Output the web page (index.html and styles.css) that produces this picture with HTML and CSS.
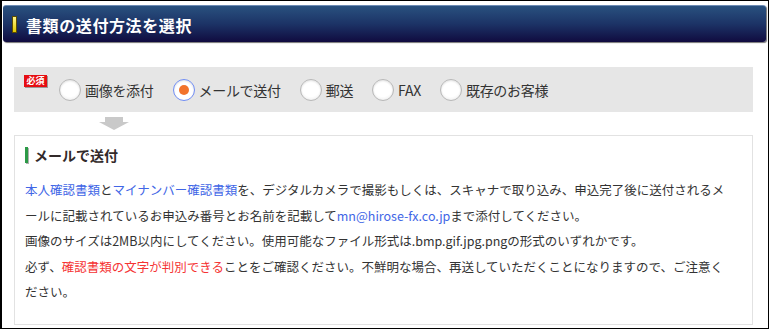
FILE: index.html
```html
<!DOCTYPE html>
<html lang="ja">
<head>
  <meta charset="UTF-8">
  <title>書類の送付方法を選択</title>
  <link rel="stylesheet" href="styles.css">
</head>
<body>
  <div class="frame">
    <header class="title-bar">
      <span class="title-mark"></span>
      <h1>書類の送付方法を選択</h1>
    </header>

    <div class="section">
      <div class="method-row">
        <span class="required">必須</span>
        <label class="method"><span class="radio"></span>画像を添付</label>
        <label class="method"><span class="radio checked"></span>メールで送付</label>
        <label class="method"><span class="radio"></span>郵送</label>
        <label class="method"><span class="radio"></span>FAX</label>
        <label class="method"><span class="radio"></span>既存のお客様</label>
      </div>

      <svg class="down-arrow" width="30" height="13" viewBox="0 0 30 13">
        <polygon points="6,0 24,0 24,5 30,5 15,13 0,5 6,5" fill="#c9c9c9" />
      </svg>

      <div class="method-box">
        <h2><span class="sub-mark"></span>メールで送付</h2>
        <p><a href="#" class="link">本人確認書類</a>と<a href="#" class="link">マイナンバー確認書類</a>を、デジタルカメラで撮影もしくは、スキャナで取り込み、申込完了後に送付されるメールに記載されているお申込み番号とお名前を記載して<a href="#" class="link">mn@hirose-fx.co.jp</a>まで添付してください。</p>
        <p>画像のサイズは2MB以内にしてください。使用可能なファイル形式は.bmp.gif.jpg.pngの形式のいずれかです。</p>
        <p>必ず、<span class="alert">確認書類の文字が判別できる</span>ことをご確認ください。不鮮明な場合、再送していただくことになりますので、ご注意ください。</p>
      </div>
    </div>
  </div>
</body>
</html>
```

FILE: styles.css
```css
body {
  margin: 0;
  padding: 0;
  background: #fff;
  font-family: "Noto Sans CJK JP", "Liberation Sans", sans-serif;
  color: #333;
}

.frame {
  box-sizing: border-box;
  width: 769px;
  height: 329px;
  border: 1px solid #000;
  border-left-width: 2px;
  padding: 4px 2px 0 1px;
  overflow: hidden;
}

.title-bar {
  display: flex;
  align-items: center;
  height: 37px;
  box-sizing: border-box;
  padding: 1px 0 0 9px;
  border-radius: 3px;
  border-top: 1px solid #6d8bb4;
  background: linear-gradient(#29517f, #1c3366 50%, #100b3f);
  box-shadow: 1px 1px 1px rgba(0,0,0,0.55);
}

.title-mark {
  width: 3px;
  height: 15px;
  border: 1px solid #5c4c00;
  background: linear-gradient(#fff58a, #e2c900);
  margin-right: 9px;
}

.title-bar h1 {
  margin: 0;
  font-size: 16px;
  font-weight: bold;
  letter-spacing: 0.6px;
  color: #fff;
}

.section {
  padding: 25px 13px 0 11px;
}

.method-row {
  display: flex;
  align-items: center;
  height: 45px;
  padding-left: 10px;
  background: #e6e6e6;
}

.required {
  align-self: flex-start;
  margin-top: 8px;
  margin-right: 12px;
  width: 23px;
  height: 12px;
  background: #e60d12;
  box-shadow: 1px 1px 0 #9a9a9a;
  color: #fff;
  font-size: 9px;
  font-weight: bold;
  line-height: 12px;
  text-align: center;
}

.method {
  display: flex;
  align-items: center;
  gap: 4px;
  margin-right: 19px;
  font-size: 14px;
  letter-spacing: -0.3px;
  color: #333;
}

.radio {
  position: relative;
  box-sizing: border-box;
  width: 22px;
  height: 22px;
  border-radius: 50%;
  border: 1px solid #b8b8b8;
  background: radial-gradient(circle at 50% 40%, #fff 55%, #e4e4e4 100%);
  box-shadow: inset 0 1px 2px rgba(0,0,0,0.12);
}

.radio.checked {
  border-color: #6f8cf3;
  background: #fff;
}

.radio.checked::after {
  content: "";
  position: absolute;
  left: 5px;
  top: 5px;
  width: 10px;
  height: 10px;
  border-radius: 50%;
  background: #f2732b;
}

.down-arrow {
  display: block;
  margin: 5px 0 5px 85px;
}

.method-box {
  box-sizing: border-box;
  height: 190px;
  border: 1px solid #e2e2e2;
  padding: 10px 24px 0 10px;
}

.method-box h2 {
  display: flex;
  align-items: center;
  gap: 6px;
  height: 18px;
  margin: 0 0 13px 0;
  font-size: 14px;
  font-weight: bold;
  color: #332a2a;
}

.sub-mark {
  width: 3px;
  height: 16px;
  background: #2c9a47;
  box-shadow: 1px 1px 0 #b0b0b0;
}

.method-box p {
  margin: 0;
  font-size: 12.5px;
  line-height: 25.5px;
}

.link {
  color: #4166e6;
  text-decoration: none;
}

.alert {
  color: #f53333;
}
```
